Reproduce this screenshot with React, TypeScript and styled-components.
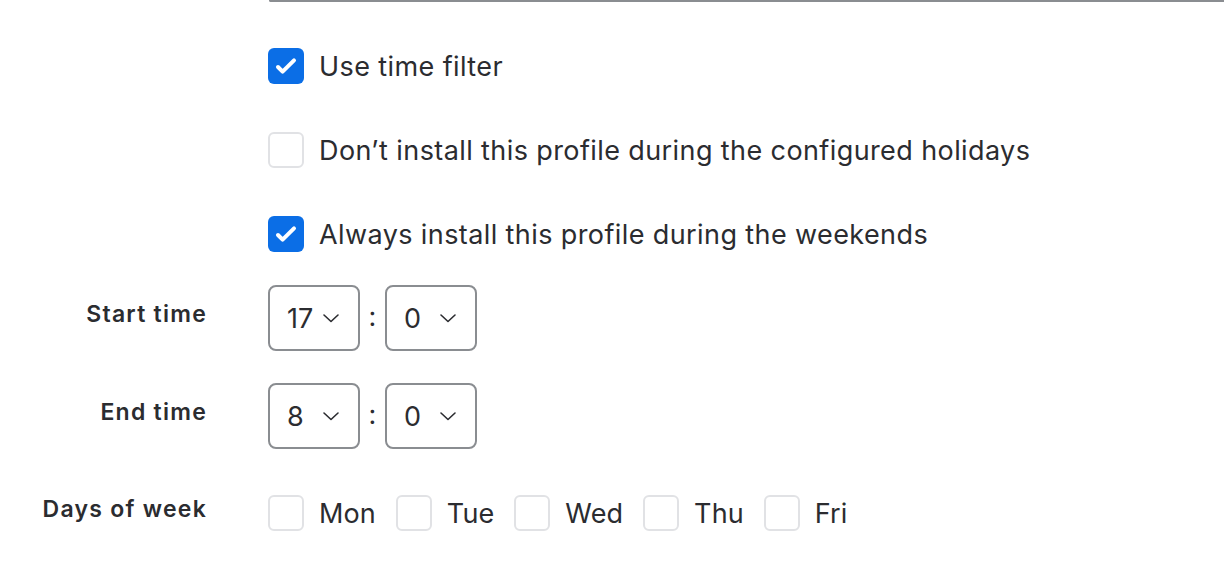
import React, { useState } from 'react';
import styled, { createGlobalStyle } from 'styled-components';

const GlobalStyle = createGlobalStyle`
  body {
    margin: 0;
    background: #fff;
    font-family: Inter, 'Noto Sans', sans-serif;
    color: #2b2c30;
  }
`;

const hours = Array.from({ length: 24 }, (_, i) => String(i));
const minutes = ['0', '15', '30', '45'];
const days = ['Mon', 'Tue', 'Wed', 'Thu', 'Fri'];

function Check({ checked, onToggle }: { checked: boolean; onToggle: () => void }) {
  return (
    <Box $checked={checked} onClick={onToggle}>
      {checked && (
        <svg width='36' height='36' viewBox='0 0 36 36'>
          <path
            d='M10 19l4.6 4.6L26 12.4'
            fill='none'
            stroke='#fff'
            strokeWidth='4'
            strokeLinecap='round'
            strokeLinejoin='round'
          />
        </svg>
      )}
    </Box>
  );
}

function TimeSelect({ value, options }: { value: string; options: string[] }) {
  return (
    <SelectBox>
      <SelectValue>{value}</SelectValue>
      <svg width='18' height='10' viewBox='0 0 18 10'>
        <path
          d='M2 2l7 6.5L16 2'
          fill='none'
          stroke='#2b2c30'
          strokeWidth='1.6'
          strokeLinecap='round'
          strokeLinejoin='round'
        />
      </svg>
      <HiddenSelect defaultValue={value}>
        {options.map((o) => (
          <option key={o}>{o}</option>
        ))}
      </HiddenSelect>
    </SelectBox>
  );
}

function App() {
  const [useFilter, setUseFilter] = useState(true);
  const [holidays, setHolidays] = useState(false);
  const [weekends, setWeekends] = useState(true);
  const [picked, setPicked] = useState<string[]>([]);

  const toggleDay = (d: string) =>
    setPicked(picked.includes(d) ? picked.filter((x) => x !== d) : [...picked, d]);

  return (
    <Page>
      <GlobalStyle />
      <FieldEdge />
      <Row $top={46}>
        <Label />
        <Control>
          <Check checked={useFilter} onToggle={() => setUseFilter(!useFilter)} />
          <OptionText>Use time filter</OptionText>
        </Control>
      </Row>
      <Row $top={48}>
        <Label />
        <Control>
          <Check checked={holidays} onToggle={() => setHolidays(!holidays)} />
          <OptionText>Don’t install this profile during the configured holidays</OptionText>
        </Control>
      </Row>
      <Row $top={48}>
        <Label />
        <Control>
          <Check checked={weekends} onToggle={() => setWeekends(!weekends)} />
          <OptionText>Always install this profile during the weekends</OptionText>
        </Control>
      </Row>

      <Row $top={33}>
        <Label>Start time</Label>
        <TimeControl>
          <TimeSelect value='17' options={hours} />
          <Colon>:</Colon>
          <TimeSelect value='0' options={minutes} />
        </TimeControl>
      </Row>

      <Row $top={32}>
        <Label>End time</Label>
        <TimeControl>
          <TimeSelect value='8' options={hours} />
          <Colon>:</Colon>
          <TimeSelect value='0' options={minutes} />
        </TimeControl>
      </Row>

      <Row $top={46}>
        <Label>Days of week</Label>
        <DaysControl>
          {days.map((d) => (
            <Control key={d}>
              <Check checked={picked.includes(d)} onToggle={() => toggleDay(d)} />
              <DayText>{d}</DayText>
            </Control>
          ))}
        </DaysControl>
      </Row>
    </Page>
  );
}

export default App;

const Page = styled.div`
  width: 1224px;
  height: 582px;
  overflow: hidden;
`;

const FieldEdge = styled.div`
  margin-left: 269px;
  height: 0;
  border-bottom: 2px solid #8a8d91;
  border-left: 2px solid #8a8d91;
  border-bottom-left-radius: 6px;
  margin-right: -20px;
`;

const Row = styled.div<{ $top: number }>`
  display: flex;
  align-items: center;
  margin-top: ${(p) => p.$top}px;
`;

const Label = styled.div`
  flex: none;
  width: 207px;
  margin-right: 61px;
  text-align: right;
  font-size: 23px;
  font-weight: 600;
  letter-spacing: 1.25px;
  color: #2b2c30;
  padding-bottom: 8px;
  white-space: nowrap;
`;

const Control = styled.div`
  display: flex;
  align-items: center;
  gap: 15px;
  height: 36px;
`;

const Box = styled.div<{ $checked: boolean }>`
  box-sizing: border-box;
  width: 36px;
  height: 36px;
  flex: none;
  border-radius: 6px;
  border: ${(p) => (p.$checked ? 'none' : '2px solid #e1e2e5')};
  background: ${(p) => (p.$checked ? '#0b6ee6' : '#fff')};
  display: flex;
  align-items: center;
  justify-content: center;
  cursor: pointer;
`;

const OptionText = styled.span`
  font-size: 27px;
  color: #2b2c30;
  letter-spacing: 0.4px;
  white-space: nowrap;
`;

const DayText = styled(OptionText)`
  letter-spacing: 0.1px;
`;

const TimeControl = styled.div`
  display: flex;
  align-items: center;
  gap: 8px;
`;

const SelectBox = styled.div`
  position: relative;
  box-sizing: border-box;
  width: 92px;
  height: 66px;
  border: 2px solid #8a8d91;
  border-radius: 8px;
  display: flex;
  align-items: center;
  justify-content: space-between;
  padding: 0 18px 0 17px;
`;

const SelectValue = styled.span`
  font-size: 27px;
  color: #2b2c30;
`;

const HiddenSelect = styled.select`
  position: absolute;
  inset: 0;
  opacity: 0;
  cursor: pointer;
`;

const Colon = styled.span`
  font-size: 27px;
  color: #2b2c30;
  width: 9px;
  text-align: center;
  margin-top: -4px;
`;

const DaysControl = styled.div`
  display: flex;
  align-items: center;
  gap: 20px;
`;
